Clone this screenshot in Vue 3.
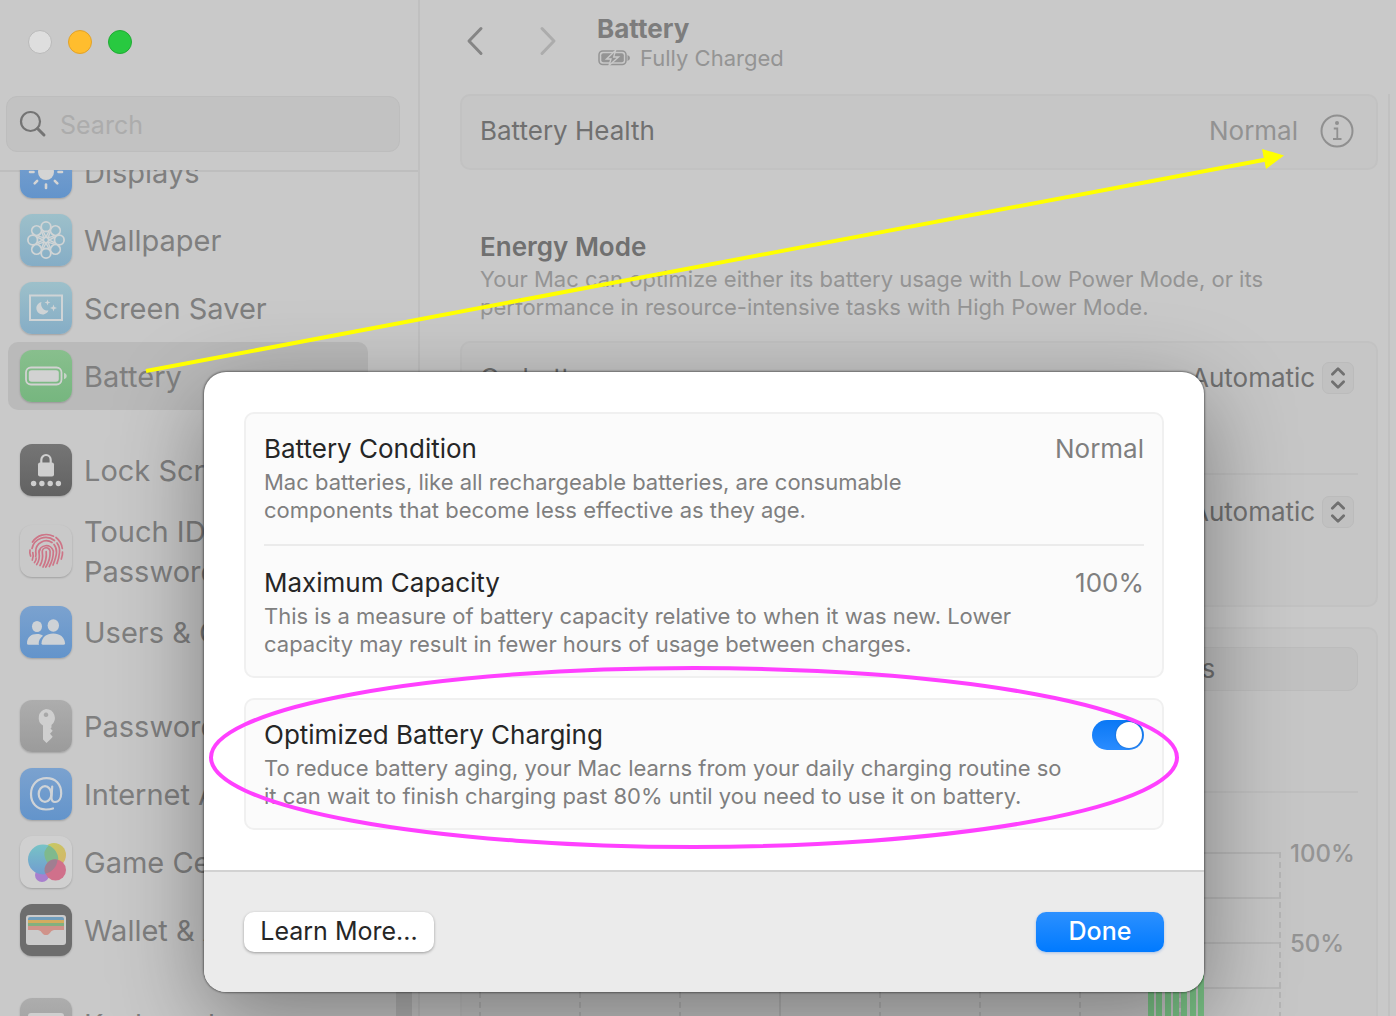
<script setup>
import { ref } from 'vue'

const groups = [
  [
    { id: 'displays', label: 'Displays' },
    { id: 'wallpaper', label: 'Wallpaper' },
    { id: 'saver', label: 'Screen Saver' },
    { id: 'battery', label: 'Battery', selected: true },
  ],
  [
    { id: 'lock', label: 'Lock Screen' },
    { id: 'touch', label: 'Touch ID & Password', tall: true },
    { id: 'users', label: 'Users & Groups' },
  ],
  [
    { id: 'passwords', label: 'Passwords' },
    { id: 'internet', label: 'Internet Accounts' },
    { id: 'game', label: 'Game Center' },
    { id: 'wallet', label: 'Wallet & Apple Pay' },
  ],
  [{ id: 'keyboard', label: 'Keyboard' }],
]

const petals = [0, 45, 90, 135, 180, 225, 270, 315]
const query = ref('')
const optimized = ref(true)
</script>

<template>
  <div class="window">
    <aside class="sidebar">
      <header class="side-head">
        <div class="lights">
          <button class="light close" aria-label="Close"></button>
          <button class="light minimize" aria-label="Minimize"></button>
          <button class="light expand" aria-label="Zoom"></button>
        </div>
        <label class="search">
          <svg width="28" height="28" viewBox="0 0 28 28" fill="none" stroke="#747474" stroke-linecap="round">
            <circle cx="11.500" cy="11.500" r="9.500" stroke-width="2.200" />
            <path d="M18.500 18.500 L25 25" stroke-width="3" />
          </svg>
          <input v-model="query" type="text" placeholder="Search" aria-label="Search" />
        </label>
      </header>
      <nav class="list">
        <ul v-for="(group, g) in groups" :key="g">
          <li v-for="item in group" :key="item.id">
            <a href="#" class="item" :class="{ selected: item.selected, tall: item.tall }">
              <svg class="icon" :class="item.id" viewBox="0 0 52 52" width="52" height="52">
                <g v-if="item.id === 'displays'" stroke="#d4d4d4" stroke-width="2.600" stroke-linecap="round">
                  <circle cx="26" cy="26" r="8" fill="#d4d4d4" stroke="none" />
                  <path v-for="a in petals" :key="a" d="M26 38.500v3.500" :transform="`rotate(${a} 26 26)`" />
                </g>
                <g v-else-if="item.id === 'wallpaper'" fill="none" stroke="#d0d4d5" stroke-width="1.800">
                  <g v-for="a in petals" :key="a" :transform="`rotate(${a} 26 26)`">
                    <circle cx="26" cy="12.700" r="4.800" />
                    <path d="M22.500 16 L26 23 L29.500 16" stroke-width="1.500" />
                  </g>
                  <circle cx="26" cy="26" r="2.800" />
                </g>
                <g v-else-if="item.id === 'saver'">
                  <rect x="10" y="13.500" width="32" height="24.500" fill="none" stroke="#cfd4d6" stroke-width="2" />
                  <path d="M21.500 20 a6.300 6.300 0 1 0 7 8.500 a6.400 6.400 0 0 1-7-8.500z" fill="#cfd4d6" />
                  <path d="M27.500 17.500l.8 2.200 2.200.8-2.200.8-.8 2.200-.8-2.200-2.200-.8 2.200-.8z M33.500 22.500l.9 2.600 2.600.9-2.600.9-.9 2.600-.9-2.600-2.600-.9 2.600-.9z" fill="#cfd4d6" />
                </g>
                <g v-else-if="item.id === 'battery'">
                  <rect x="6" y="17.500" width="35.500" height="17" rx="5" fill="none" stroke="#d2d2d2" stroke-width="1.800" />
                  <rect x="8.800" y="20.300" width="30" height="11.500" rx="2.800" fill="#d2d2d2" />
                  <path d="M44 22.800 q2.800 .8 2.800 3.200 t-2.800 3.200z" fill="#c6d3c7" />
                </g>
                <g v-else-if="item.id === 'lock'" fill="#cfcfcf">
                  <rect x="18" y="18.500" width="16" height="14" rx="2" />
                  <path d="M21.300 20v-4a4.700 5 0 0 1 9.400 0v4" fill="none" stroke="#cfcfcf" stroke-width="2.200" />
                  <circle cx="13.600" cy="39.500" r="2.700" /><circle cx="21.900" cy="39.500" r="2.700" />
                  <circle cx="30.200" cy="39.500" r="2.700" /><circle cx="38.400" cy="39.500" r="2.700" />
                </g>
                <g v-else-if="item.id === 'touch'" fill="none" stroke="#cd7587" stroke-width="1.700" stroke-linecap="round">
                  <path d="M12.500 17 A16.500 16.500 0 0 1 33.500 11.200 M36 12.500 A16.500 16.500 0 0 1 42.300 23.500" />
                  <path d="M10 25 q-.6 3 .6 6 M42.500 27 q.3 3-1.200 7" />
                  <path d="M12 23.500 A14 14 0 0 1 34.500 15.500 M37 18 q3 4 2.500 9.500 t-2.500 11" />
                  <path d="M12.800 27.500 q1.200 4-.5 7.500 M15.700 31.500 q.6-2.500 0-5 A10.600 10.600 0 0 1 32 17.500 M34 19.500 q2.800 3.500 2.500 8 t-3.500 12.500" />
                  <path d="M14.500 37.500 q2-2.500 1.600-4.500 M16.700 39.500 q3.500-5 2.300-12 A7.300 7.300 0 0 1 33.300 26 q.2 8-4 15.500" />
                  <path d="M20 40.500 q3.500-6 2.300-13.500 a3.900 4 0 0 1 7.800-.5 q.3 8.500-4.300 15.500 M23 42 q4-7.500 3.200-15.500 M20 24.500 q-.8 1-.9 2.500" />
                </g>
                <g v-else-if="item.id === 'users'" fill="#ced2d6">
                  <ellipse cx="17" cy="20.500" rx="5" ry="5.500" />
                  <path d="M7 37.500 c0-6.200 4-9.500 10-9.500 c2.600 0 4.600.6 6 1.700 c-2.800 2-4.300 4.800-4.300 7.800 c0 .5.200 1 .5 1.300 H8.500 q-1.500 0-1.500-1.300z" />
                  <ellipse cx="33.300" cy="19.500" rx="5.700" ry="6.200" />
                  <path d="M21.500 37.300 c.4-6 5-9.700 11.700-9.700 s11.300 3.700 11.800 9.700 q0 1.500-1.500 1.500 H23 q-1.500 0-1.500-1.500z" />
                </g>
                <path v-else-if="item.id === 'passwords'" fill="#cfcfcf" fill-rule="evenodd" d="M26 9 a9 9 0 0 1 5.500 16 V27.500 l-1 1 2.200 2.200-2.700 3 2.700 3-1.700 2 L26.500 43 l-3.500-3.500 V25.500 A9 9 0 0 1 26 9z M26 12.500 a2.300 2.300 0 1 0 .01 0z" />
                <g v-else-if="item.id === 'internet'" fill="none" stroke="#cfd3d7" stroke-width="2.200" stroke-linecap="round">
                  <ellipse cx="25" cy="26" rx="6.300" ry="7.800" />
                  <path d="M32.200 18.500 L31.500 30 q.2 4 3.500 4 c4 0 6.200-4 6.200-8.500 C41.200 16 35.500 10.200 26.500 10.200 S11 16.500 11 26 s6 15.500 15 15.500 q4 0 7-1" />
                </g>
                <g v-else-if="item.id === 'game'">
                  <defs>
                    <linearGradient id="gc-blue" x1="0" y1="0" x2="0" y2="1"><stop offset="0" stop-color="#77c3c6" /><stop offset="1" stop-color="#719dd0" /></linearGradient>
                    <linearGradient id="gc-gold" x1="0" y1="0" x2="1" y2="1"><stop offset="0" stop-color="#c3cc62" /><stop offset="1" stop-color="#d6b469" /></linearGradient>
                  </defs>
                  <circle cx="22" cy="39" r="7" fill="#a87fce" />
                  <circle cx="34" cy="19" r="12" fill="url(#gc-gold)" />
                  <circle cx="23" cy="23.500" r="15" fill="url(#gc-blue)" />
                  <path d="M28.700 9.600 A15 15 0 0 1 36.500 30.700 A12 12 0 0 1 28.700 9.600z" fill="#7fb98d" />
                  <circle cx="35.500" cy="34" r="10.500" fill="#d0708b" />
                  <path d="M25.200 37.500 A10.500 10.500 0 0 1 37.500 23.700 A15 15 0 0 1 25.200 37.500z" fill="#a07e91" />
                </g>
                <g v-else-if="item.id === 'wallet'">
                  <rect x="6" y="11" width="40" height="30" rx="3" fill="#cbcbcb" />
                  <path d="M8 15 q0-2 2-2 h32 q2 0 2 2 v2 H8z" fill="#6f9dbd" />
                  <rect x="8" y="16" width="36" height="3.200" fill="#d3ac5f" />
                  <rect x="8" y="19" width="36" height="3.200" fill="#82b07f" />
                  <path d="M8 22 h36 v4 H34.500 c-2 0-3 1-4 2.200 c-2.600 3.800-6.400 3.800-9 0 C20.500 27 19.500 26 17.500 26 H8z" fill="#d0938a" />
                </g>
                <rect v-else x="8" y="15" width="36" height="24" rx="3" fill="#cfcfcf" />
              </svg>
              <span>{{ item.label }}</span>
            </a>
          </li>
        </ul>
      </nav>
      <div class="thumb"></div>
    </aside>

    <main class="main">
      <header class="head">
        <button class="nav" aria-label="Back">
          <svg width="18" height="30" viewBox="0 0 18 30"><path d="M15 2.500 L3 15 L15 27.500" stroke="#858585" /></svg>
        </button>
        <button class="nav" aria-label="Forward">
          <svg width="18" height="30" viewBox="0 0 18 30"><path d="M3 2.500 L15 15 L3 27.500" stroke="#acacac" /></svg>
        </button>
        <div class="titles">
          <h1>Battery</h1>
          <p>
            <svg width="34" height="18" viewBox="0 0 34 18">
              <rect x="2" y="2" width="27" height="13.500" rx="3.800" fill="none" stroke="#949494" stroke-width="1.500" />
              <rect x="4.300" y="4.300" width="22.500" height="9" rx="2" fill="#949494" />
              <path d="M30.500 6 q2.500.8 2.500 3 t-2.500 3z" fill="#949494" />
              <path d="M18.500 1.500 L9.500 10 h4.500 l-2 6.500 9.500-8.500 h-4.800z" fill="#949494" stroke="#c9c9c9" stroke-width="1.400" />
            </svg>
            Fully Charged
          </p>
        </div>
      </header>

      <div class="content">
        <section class="panel health">
          <span>Battery Health</span>
          <span class="value">Normal</span>
          <button class="info" aria-label="Battery health details">
            <svg width="34" height="34" viewBox="0 0 34 34" fill="none" stroke="#909090" stroke-width="2">
              <circle cx="17" cy="17" r="15.500" />
              <circle cx="17" cy="9" r="2" fill="#909090" stroke="none" />
              <path d="M13.800 14.500 h3.500 v10 M13 25 h8.500" stroke-width="1.800" />
            </svg>
          </button>
        </section>

        <h2>Energy Mode</h2>
        <p class="note">Your Mac can optimize either its battery usage with Low Power Mode, or its<br />performance in resource-intensive tasks with High Power Mode.</p>

        <section class="panel modes">
          <div class="mode">
            <label for="on-battery">On battery</label>
            <div class="picker">
              <select id="on-battery"><option>Automatic</option></select>
              <svg width="32" height="32" viewBox="0 0 32 32"><path d="M10 12 L16 6 L22 12 M10 20 L16 26 L22 20" /></svg>
            </div>
          </div>
          <div class="mode">
            <div class="picker">
              <select aria-label="On power adapter"><option>Automatic</option></select>
              <svg width="32" height="32" viewBox="0 0 32 32"><path d="M10 12 L16 6 L22 12 M10 20 L16 26 L22 20" /></svg>
            </div>
          </div>
        </section>

        <section class="panel usage">
          <div class="segments">
            <button>Last 24 Hours</button>
            <button>Last 10 Days</button>
          </div>
          <div class="chart">
            <div class="plot">
              <div v-for="n in 8" :key="n" class="column"></div>
              <div class="bars"><i v-for="n in 7" :key="n"></i></div>
            </div>
            <div class="scale"><span>100%</span><span>50%</span></div>
          </div>
        </section>
      </div>
    </main>

    <div class="overlay">
      <div class="sheet" role="dialog" aria-label="Battery Health">
        <div class="body">
          <section class="card">
            <div class="entry">
              <div class="line"><h3>Battery Condition</h3><span>Normal</span></div>
              <p>Mac batteries, like all rechargeable batteries, are consumable<br />components that become less effective as they age.</p>
            </div>
            <div class="entry">
              <div class="line"><h3>Maximum Capacity</h3><span>100%</span></div>
              <p>This is a measure of battery capacity relative to when it was new. Lower<br />capacity may result in fewer hours of usage between charges.</p>
            </div>
          </section>
          <section class="card">
            <div class="entry">
              <div class="line">
                <h3><label for="optimized">Optimized Battery Charging</label></h3>
                <input id="optimized" v-model="optimized" class="switch" type="checkbox" />
              </div>
              <p>To reduce battery aging, your Mac learns from your daily charging routine so<br />it can wait to finish charging past 80% until you need to use it on battery.</p>
            </div>
          </section>
        </div>
        <footer class="foot">
          <button class="more">Learn More...</button>
          <button class="done">Done</button>
        </footer>
      </div>
    </div>

    <svg class="marks" width="1396" height="1016" viewBox="0 0 1396 1016" fill="none" aria-hidden="true">
      <path d="M146 371 L1266 159.500" stroke="#ffff00" stroke-width="4" />
      <path d="M1284 155.500 L1262 149 L1266 169z" fill="#ffff00" />
      <ellipse cx="694" cy="757.500" rx="483" ry="89.500" stroke="#ff40ff" stroke-width="4" />
    </svg>
  </div>
</template>

<style>
body {
  margin: 0;
}
</style>

<style scoped>
* {
  box-sizing: border-box;
}
h1, h2, h3, p, ul {
  margin: 0;
  padding: 0;
}
button, input, select {
  font: inherit;
  color: inherit;
  margin: 0;
  padding: 0;
  border: 0;
  background: none;
}
svg {
  display: block;
  flex: none;
}
.window {
  position: relative;
  display: flex;
  height: 100vh;
  overflow: hidden;
  background: #c9c9c9;
  color: #707070;
  font-family: Inter, "Liberation Sans", sans-serif;
  font-size: 26px;
  line-height: 34px;
}

.sidebar {
  position: relative;
  display: flex;
  flex-direction: column;
  flex: none;
  width: 420px;
  border-right: 2px solid #c0c0c0;
}
.side-head {
  flex: none;
  margin-bottom: -2px;
  padding: 30px 18px 18px 6px;
  border-bottom: 2px solid #bebebe;
}
.lights {
  display: flex;
  gap: 16px;
  padding-left: 22px;
  margin-bottom: 42px;
}
.light {
  width: 24px;
  height: 24px;
  border-radius: 50%;
}
.close {
  background: #dedede;
  border: 1px solid #b9b9b9;
}
.minimize {
  background: #ffbd2e;
  border: 1px solid #e1a22a;
}
.expand {
  background: #28c940;
  border: 1px solid #20ab34;
}
.search {
  display: flex;
  align-items: center;
  gap: 13px;
  height: 56px;
  padding: 0 12px;
  border: 1px solid #bdbdbd;
  border-radius: 11px;
  background: #c2c2c2;
}
.search input {
  flex: 1;
  min-width: 0;
  padding-top: 2px;
  outline: none;
  font-size: 25px;
}
.search input::placeholder {
  color: #acacac;
  opacity: 1;
}
.list {
  position: relative;
  flex: 1;
  min-height: 0;
  overflow: hidden;
  padding: 0 50px 0 8px;
}
.list ul {
  list-style: none;
  margin-bottom: 26px;
}
.list ul:first-child {
  margin-top: -32px;
}
.item {
  display: flex;
  align-items: center;
  gap: 12px;
  height: 68px;
  padding: 0 12px;
  border-radius: 10px;
  color: #7f7f7f;
  font-size: 29px;
  line-height: 40px;
  text-decoration: none;
}
.item span {
  padding-top: 2px;
}
.item.tall {
  height: 94px;
}
.item.tall span {
  width: 180px;
}
.item.selected {
  background: #bababa;
}
.icon {
  border-radius: 12px;
  box-shadow: 0 1px 2px rgba(0, 0, 0, 0.2);
}
.displays, .users, .internet {
  background: linear-gradient(#7ba2cf, #6394cb);
}
.wallpaper, .saver {
  background: linear-gradient(#9dc0ca, #85adc6);
}
.battery {
  background: linear-gradient(#88bf8d, #76b67f);
}
.lock {
  background: linear-gradient(#757575, #626262);
}
.touch {
  background: #c9c9c9;
}
.passwords, .keyboard {
  background: linear-gradient(#adadad, #9b9b9b);
}
.game {
  background: #d0d0d0;
}
.wallet {
  background: #6d6d6d;
}
.thumb {
  position: absolute;
  right: 6px;
  bottom: 0;
  width: 16px;
  height: 300px;
  background: #b5b5b5;
}

.main {
  display: flex;
  flex-direction: column;
  flex: 1;
  min-width: 0;
}
.head {
  display: flex;
  flex: none;
  height: 94px;
  padding: 12px 0 0 46px;
}
.nav {
  width: 18px;
  height: 30px;
  margin: 14px 55px 0 0;
}
.nav path {
  fill: none;
  stroke-width: 3;
  stroke-linecap: round;
  stroke-linejoin: round;
}
.nav + .titles {
  margin-left: -15px;
}
h1 {
  color: #7d7d7d;
  font-size: 26px;
  font-weight: 700;
  line-height: 34px;
}
.titles p {
  display: flex;
  align-items: center;
  gap: 9px;
  color: #949494;
  font-size: 22px;
  line-height: 24px;
}
.content {
  flex: 1;
  min-height: 0;
  overflow: hidden;
  margin-right: 6px;
  padding: 0 10px 0 40px;
  border-right: 2px solid #c1c1c1;
}
.panel {
  border: 2px solid #c2c2c2;
  border-radius: 10px;
  background: #c6c6c6;
}
.health {
  display: flex;
  align-items: center;
  height: 76px;
  padding: 0 22px 2px 18px;
}
.value {
  margin-left: auto;
  color: #929292;
}
.info {
  width: 34px;
  height: 34px;
  margin-left: 22px;
}
h2 {
  margin: 60px 0 0 20px;
  font-size: 26px;
  font-weight: 600;
  line-height: 34px;
}
.note {
  padding: 1px 0 0 20px;
  color: #949494;
  font-size: 22px;
  line-height: 28px;
  white-space: nowrap;
}
.modes {
  height: 266px;
  margin-top: 20px;
  padding: 0 18px;
}
.mode {
  display: flex;
  align-items: flex-start;
  height: 130px;
  padding: 18px 4px 0 0;
}
.mode + .mode {
  border-top: 2px solid #bfbfbf;
  padding-top: 20px;
}
.picker {
  position: relative;
  margin-left: auto;
}
.picker select {
  display: block;
  height: 34px;
  padding-right: 38px;
  appearance: none;
}
.picker svg {
  position: absolute;
  top: 1px;
  right: 0;
  border: 1px solid #bbbbbb;
  border-radius: 7px;
  background: #c1c1c1;
  pointer-events: none;
}
.picker path {
  fill: none;
  stroke: #707070;
  stroke-width: 3;
  stroke-linecap: round;
  stroke-linejoin: round;
}
.usage {
  margin-top: 20px;
  padding: 18px;
}
.segments {
  display: flex;
  height: 44px;
  border: 1px solid #bcbcbc;
  border-radius: 10px;
  background: #c1c1c1;
}
.segments button {
  flex: 1;
}
.chart {
  display: flex;
  margin-top: 100px;
  padding-top: 59px;
  border-top: 2px solid #bfbfbf;
}
.plot {
  position: relative;
  display: flex;
  flex: 1;
  height: 226px;
  margin-left: -1px;
  border-left: 2px dashed #b5b5b5;
  background: repeating-linear-gradient(#b8b8b8 0 2px, transparent 2px 45px);
}
.column {
  flex: 1;
  border-right: 2px dashed #b5b5b5;
}
.column:nth-child(3) {
  border-right-style: solid;
}
.bars {
  position: absolute;
  right: 77px;
  bottom: 0;
  display: flex;
  justify-content: space-between;
  width: 56px;
  height: 226px;
}
.bars i {
  width: 6px;
  background: #7bc487;
}
.scale {
  display: flex;
  flex-direction: column;
  flex: none;
  gap: 56px;
  width: 77px;
  margin-top: -15px;
  padding-left: 9px;
  color: #949494;
  font-size: 24px;
  font-weight: 500;
}

.overlay {
  position: absolute;
  inset: 0;
  padding: 372px 192px 24px 204px;
}
.sheet {
  overflow: hidden;
  border-radius: 22px;
  background: #ffffff;
  box-shadow: 0 0 2px 1px rgba(0, 0, 0, 0.4), 0 28px 90px rgba(0, 0, 0, 0.38);
}
.body {
  display: flex;
  flex-direction: column;
  gap: 20px;
  padding: 40px;
}
.card {
  padding: 0 18px;
  border: 2px solid #f0f0f0;
  border-radius: 10px;
  background: #fbfbfb;
}
.entry {
  padding: 18px 0;
}
.entry + .entry {
  margin-top: 2px;
  border-top: 2px solid #ebebeb;
  padding-top: 20px;
}
.line {
  display: flex;
  align-items: center;
  justify-content: space-between;
  height: 34px;
  margin-bottom: 2px;
  color: #7f7f7f;
}
h3 {
  color: #262626;
  font-size: 26px;
  font-weight: 400;
}
.entry p {
  color: #7f7f7f;
  font-size: 22px;
  line-height: 28px;
  white-space: nowrap;
}
.switch {
  display: flex;
  width: 52px;
  height: 30px;
  padding: 2px;
  border-radius: 15px;
  background: #bfbfbf;
  appearance: none;
}
.switch:checked {
  justify-content: flex-end;
  background: linear-gradient(#0a78f5, #2a8cff);
}
.switch::before {
  content: "";
  width: 26px;
  height: 26px;
  border-radius: 50%;
  background: #ffffff;
  box-shadow: 0 0 2px rgba(0, 0, 0, 0.3);
}
.foot {
  display: flex;
  justify-content: space-between;
  padding: 40px;
  border-top: 2px solid #d2d2d2;
  background: #ebebeb;
}
.foot button {
  height: 40px;
  padding-bottom: 2px;
  border-radius: 10px;
  font-size: 25px;
}
.more {
  width: 190px;
  background: #ffffff;
  color: #262626;
  box-shadow: 0 1px 3px rgba(0, 0, 0, 0.35);
}
.foot .done {
  width: 128px;
  background: linear-gradient(#2c90ff, #007aff);
  color: #ffffff;
  font-weight: 500;
  box-shadow: 0 1px 3px rgba(0, 90, 220, 0.3);
}
.marks {
  position: absolute;
  top: 0;
  left: 0;
  pointer-events: none;
}
</style>
